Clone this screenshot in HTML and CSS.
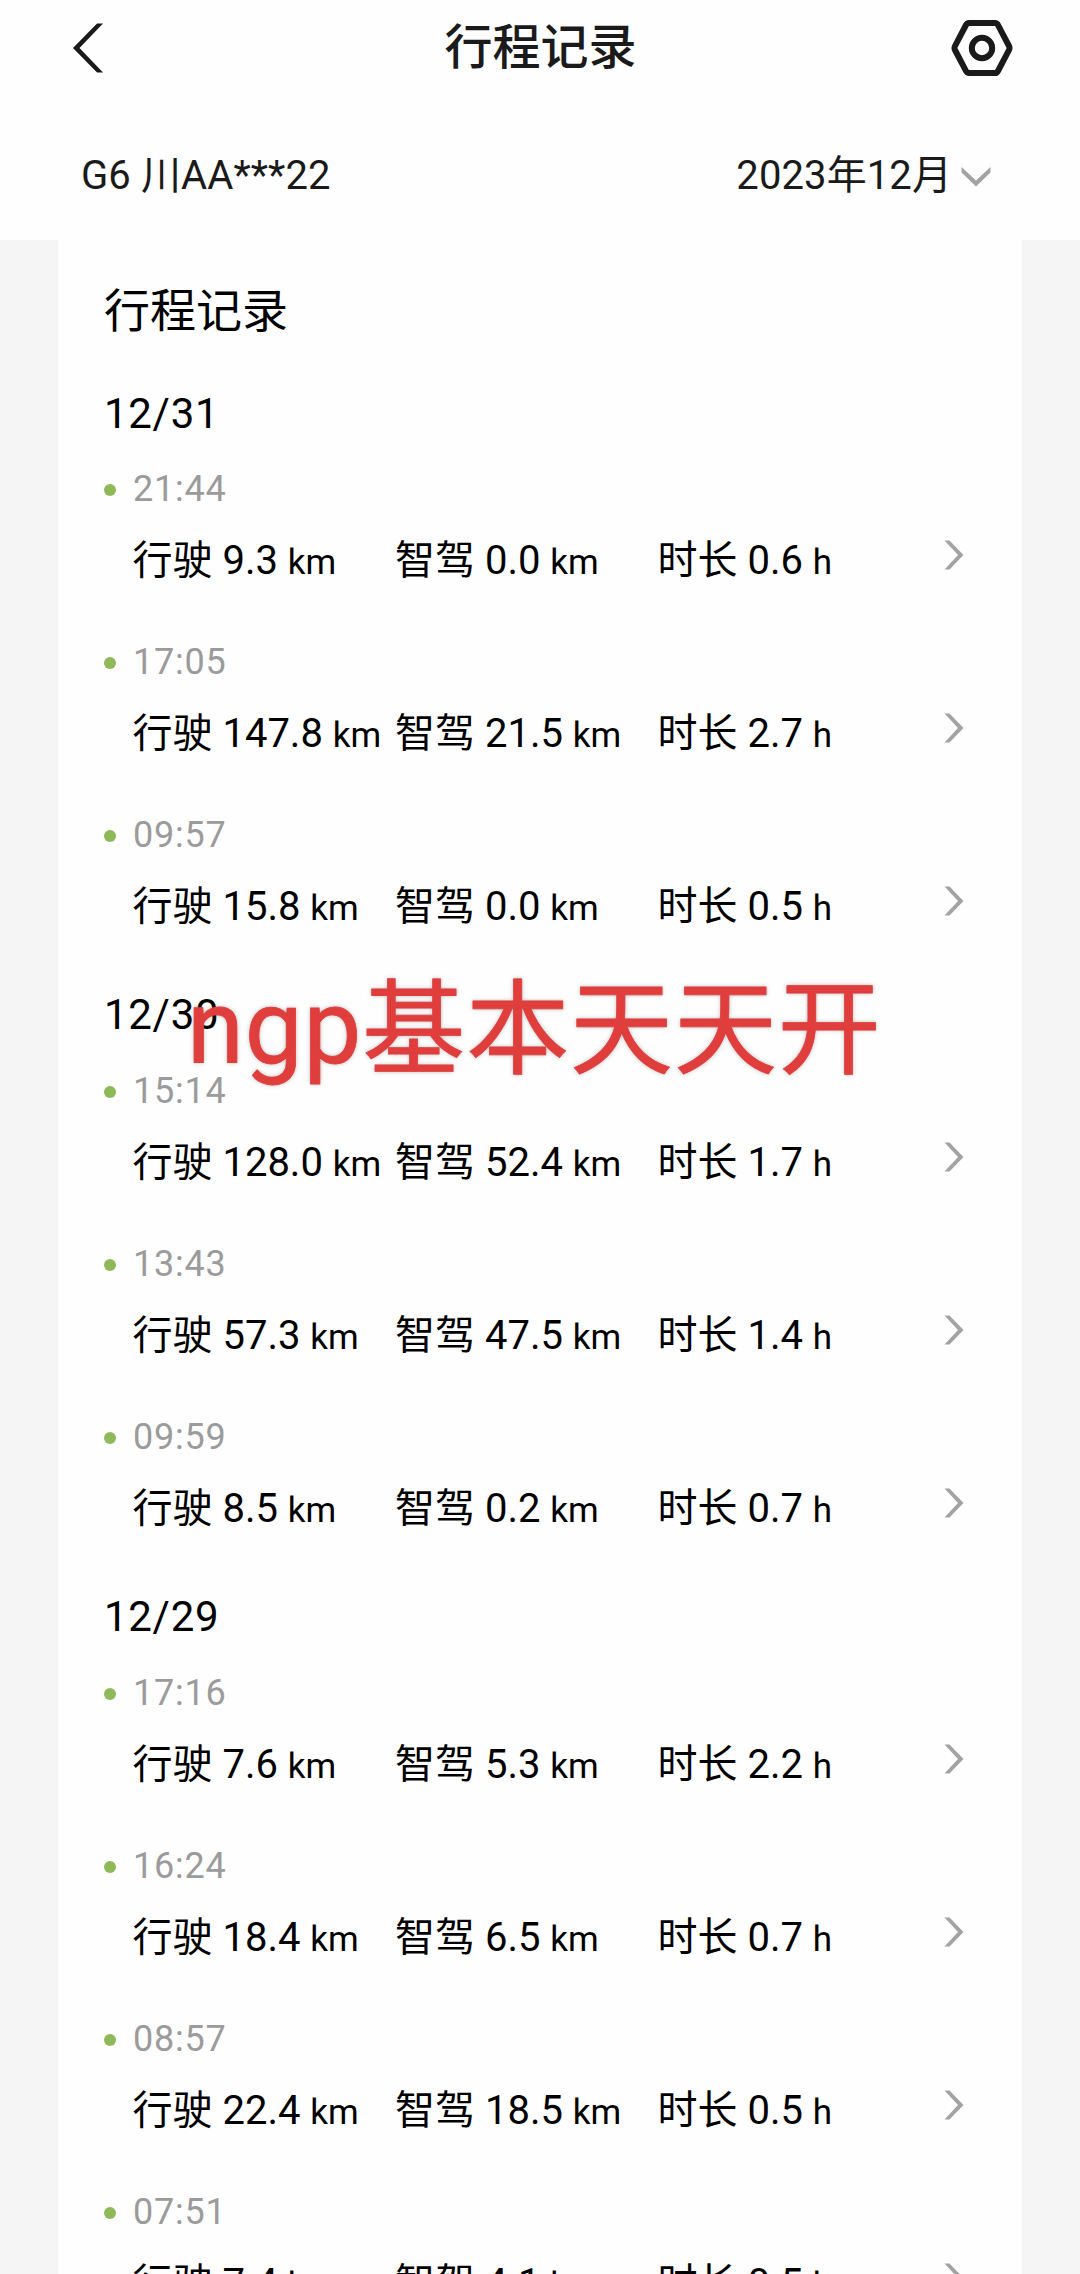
FILE: index.html
```html
<!DOCTYPE html>
<html lang="zh-CN">
<head>
    <meta charset="UTF-8">
    <meta name="viewport" content="width=device-width, initial-scale=1.0">
    <title>行程记录</title>
    <link rel="stylesheet" href="styles.css">
</head>
<body>

    <svg width="0" height="0" class="defs">
        <symbol id="arrow" viewBox="0 0 20 30">
            <path d="M0.5 0.5H5.5L19.5 15L5.5 29.5H0.5L14 15Z" fill="#a3a3a3"/>
        </symbol>
    </svg>

    <header class="header">
        <div class="topbar">
            <svg class="back" viewBox="0 0 30 50">
                <path d="M24 0.5H30L6.5 25L30 49.5H24L0 25Z" fill="#1a1a1a"/>
            </svg>
            <h1>行程记录</h1>
            <svg class="settings" viewBox="0 0 62 56">
                <path d="M18 3H44Q46 3 47 5L58 26Q59 28 58 30L47 51Q46 53 44 53H18Q16 53 15 51L4 30Q3 28 4 26L15 5Q16 3 18 3Z" fill="none" stroke="#1a1a1a" stroke-width="6"/>
                <circle cx="31" cy="28" r="10.2" fill="none" stroke="#1a1a1a" stroke-width="6"/>
            </svg>
        </div>
        <div class="filter">
            <span class="car">G6 川AA***22</span>
            <span class="month">2023年12月</span>
            <svg class="down" viewBox="0 0 30 20">
                <path d="M0.5 0L15 13.5L29.5 0V5.5L15 19.5L0.5 5.5Z" fill="#a3a3a3"/>
            </svg>
        </div>
    </header>

    <main class="card">
        <h2>行程记录</h2>

        <section class="day">
            <h3>12/31</h3>
            <div class="trip">
                <div class="time">21:44</div>
                <div class="info">
                    <span>行驶 9.3 <small>km</small></span>
                    <span>智驾 0.0 <small>km</small></span>
                    <span>时长 0.6 <small>h</small></span>
                    <svg class="arrow"><use href="#arrow"/></svg>
                </div>
            </div>
            <div class="trip">
                <div class="time">17:05</div>
                <div class="info">
                    <span>行驶 147.8 <small>km</small></span>
                    <span>智驾 21.5 <small>km</small></span>
                    <span>时长 2.7 <small>h</small></span>
                    <svg class="arrow"><use href="#arrow"/></svg>
                </div>
            </div>
            <div class="trip">
                <div class="time">09:57</div>
                <div class="info">
                    <span>行驶 15.8 <small>km</small></span>
                    <span>智驾 0.0 <small>km</small></span>
                    <span>时长 0.5 <small>h</small></span>
                    <svg class="arrow"><use href="#arrow"/></svg>
                </div>
            </div>
        </section>

        <section class="day">
            <h3>12/30</h3>
            <div class="trip">
                <div class="time">15:14</div>
                <div class="info">
                    <span>行驶 128.0 <small>km</small></span>
                    <span>智驾 52.4 <small>km</small></span>
                    <span>时长 1.7 <small>h</small></span>
                    <svg class="arrow"><use href="#arrow"/></svg>
                </div>
            </div>
            <div class="trip">
                <div class="time">13:43</div>
                <div class="info">
                    <span>行驶 57.3 <small>km</small></span>
                    <span>智驾 47.5 <small>km</small></span>
                    <span>时长 1.4 <small>h</small></span>
                    <svg class="arrow"><use href="#arrow"/></svg>
                </div>
            </div>
            <div class="trip">
                <div class="time">09:59</div>
                <div class="info">
                    <span>行驶 8.5 <small>km</small></span>
                    <span>智驾 0.2 <small>km</small></span>
                    <span>时长 0.7 <small>h</small></span>
                    <svg class="arrow"><use href="#arrow"/></svg>
                </div>
            </div>
        </section>

        <section class="day">
            <h3>12/29</h3>
            <div class="trip">
                <div class="time">17:16</div>
                <div class="info">
                    <span>行驶 7.6 <small>km</small></span>
                    <span>智驾 5.3 <small>km</small></span>
                    <span>时长 2.2 <small>h</small></span>
                    <svg class="arrow"><use href="#arrow"/></svg>
                </div>
            </div>
            <div class="trip">
                <div class="time">16:24</div>
                <div class="info">
                    <span>行驶 18.4 <small>km</small></span>
                    <span>智驾 6.5 <small>km</small></span>
                    <span>时长 0.7 <small>h</small></span>
                    <svg class="arrow"><use href="#arrow"/></svg>
                </div>
            </div>
            <div class="trip">
                <div class="time">08:57</div>
                <div class="info">
                    <span>行驶 22.4 <small>km</small></span>
                    <span>智驾 18.5 <small>km</small></span>
                    <span>时长 0.5 <small>h</small></span>
                    <svg class="arrow"><use href="#arrow"/></svg>
                </div>
            </div>
            <div class="trip">
                <div class="time">07:51</div>
                <div class="info">
                    <span>行驶 7.4 <small>km</small></span>
                    <span>智驾 4.1 <small>km</small></span>
                    <span>时长 0.5 <small>h</small></span>
                    <svg class="arrow"><use href="#arrow"/></svg>
                </div>
            </div>
        </section>
    </main>

    <div class="note"><span class="latin">ngp</span>基本天天开</div>

</body>
</html>
```

FILE: styles.css
```css
* {
    box-sizing: border-box;
}

body {
    margin: 0;
    height: 2274px;
    overflow: hidden;
    position: relative;
    background-color: #f5f5f5;
    color: #000;
    font-family: Roboto, "Noto Sans CJK SC", sans-serif;
}

h1, h2, h3 {
    margin: 0;
}

.defs {
    position: absolute;
}

.header {
    height: 240px;
    background-color: #fefefe;
    color: #1a1a1a;
}

.topbar {
    display: flex;
    align-items: center;
    justify-content: space-between;
    height: 95px;
    padding: 0 67px 0 73px;
}

.topbar h1 {
    font-size: 48px;
    font-weight: 500;
    line-height: 60px;
    margin-left: 27px;
}

.back {
    width: 30px;
    height: 50px;
}

.settings {
    width: 62px;
    height: 56px;
}

.filter {
    display: flex;
    align-items: center;
    padding: 51px 89px 0 81px;
    font-size: 40px;
    line-height: 60px;
    letter-spacing: 0.1px;
}

.month {
    margin-left: auto;
    margin-right: 9px;
}

.down {
    width: 30px;
    height: 20px;
    margin-top: 2px;
}

.card {
    height: 2034px;
    margin: 0 58px;
    padding: 41px 58px 0 46px;
    overflow: hidden;
    background-color: #fefefe;
}

.card h2 {
    margin-bottom: 42.6px;
    font-size: 46px;
    font-weight: 400;
    line-height: 60px;
}

.day {
    margin-bottom: 2.4px;
}

.day h3 {
    margin-bottom: 20.4px;
    font-size: 42px;
    font-weight: 400;
    line-height: 60px;
    letter-spacing: 0.7px;
}

.trip {
    height: 173px;
}

.time {
    display: flex;
    align-items: center;
    color: #9b9b9b;
    font-size: 36px;
    line-height: 50px;
    letter-spacing: 0.8px;
}

.time::before {
    content: "";
    width: 12px;
    height: 12px;
    margin: 3px 17px 0 0;
    border-radius: 50%;
    background-color: #8fb859;
}

.info {
    display: flex;
    align-items: center;
    margin-top: 17px;
    padding-left: 28.5px;
    font-size: 40px;
    line-height: 60px;
}

.info span {
    width: 262.5px;
    white-space: nowrap;
}

.info small {
    font-size: 35px;
}

.arrow {
    width: 20px;
    height: 30px;
    margin: 0 0 13px auto;
}

.note {
    position: absolute;
    left: 187px;
    top: 966px;
    color: #df3e3c;
    font-size: 103px;
    line-height: 130px;
    letter-spacing: 0.9px;
    white-space: nowrap;
    -webkit-text-stroke: 0.8px #df3e3c;
    text-shadow: 0 0 4px rgba(120, 90, 90, 0.5);
}

.latin {
    line-height: 1;
    vertical-align: 3px;
}
```
